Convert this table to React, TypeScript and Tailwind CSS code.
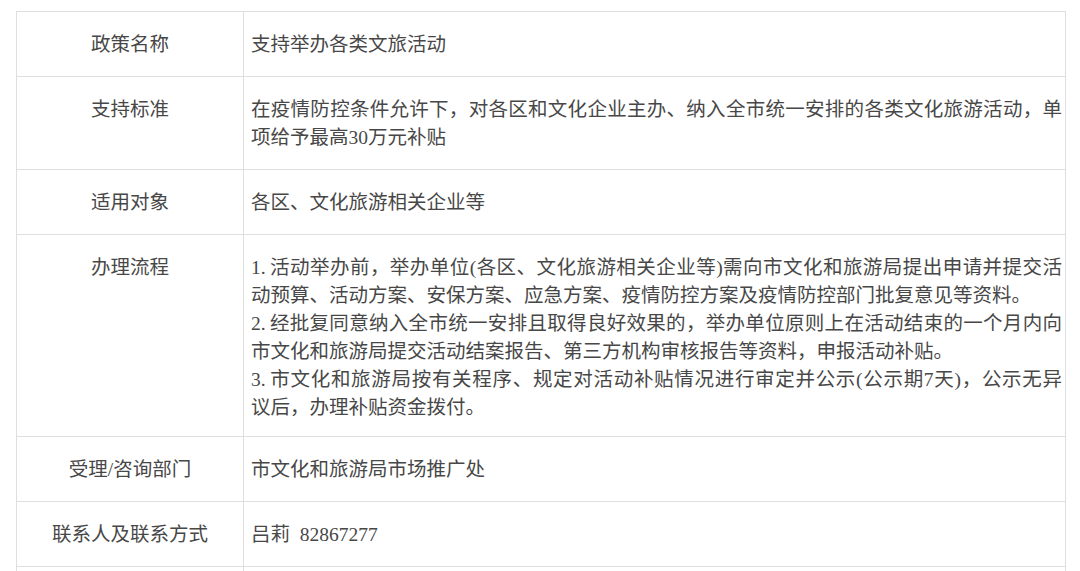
const font = {
  fontFamily: '"Liberation Serif", "Noto Sans CJK SC", serif',
};

type Line = { text: string; num?: string; full?: boolean };

type Row = {
  label: string;
  lines: Line[];
  pb?: string;
};

const rows: Row[] = [
  { label: "政策名称", lines: [{ text: "支持举办各类文旅活动" }] },
  {
    label: "支持标准",
    lines: [
      {
        text: "在疫情防控条件允许下，对各区和文化企业主办、纳入全市统一安排的各类文化旅游活动，单",
        full: true,
      },
      { text: "项给予最高30万元补贴" },
    ],
  },
  { label: "适用对象", lines: [{ text: "各区、文化旅游相关企业等" }] },
  {
    label: "办理流程",
    pb: "pb-[14px]",
    lines: [
      {
        num: "1.",
        text: "活动举办前，举办单位(各区、文化旅游相关企业等)需向市文化和旅游局提出申请并提交活",
        full: true,
      },
      { text: "动预算、活动方案、安保方案、应急方案、疫情防控方案及疫情防控部门批复意见等资料。" },
      {
        num: "2.",
        text: "经批复同意纳入全市统一安排且取得良好效果的，举办单位原则上在活动结束的一个月内向",
        full: true,
      },
      { text: "市文化和旅游局提交活动结案报告、第三方机构审核报告等资料，申报活动补贴。" },
      {
        num: "3.",
        text: "市文化和旅游局按有关程序、规定对活动补贴情况进行审定并公示(公示期7天)，公示无异",
        full: true,
      },
      { text: "议后，办理补贴资金拨付。" },
    ],
  },
  { label: "受理/咨询部门", lines: [{ text: "市文化和旅游局市场推广处" }] },
  { label: "联系人及联系方式", lines: [{ text: "吕莉  82867277" }] },
];

function PolicyRow({ row }: { row: Row }) {
  const pb = row.pb ?? "pb-[17px]";
  return (
    <div className="flex">
      <div
        className={`w-[227px] shrink-0 border-r border-b border-[#dfdfdf] pt-[19px] ${pb} text-center`}
      >
        {row.label}
      </div>
      <div
        className={`w-[822px] shrink-0 border-r border-b border-[#dfdfdf] pl-[7px] pr-[3px] pt-[19px] ${pb}`}
      >
        {row.lines.map((line, i) => (
          <div
            key={i}
            className={
              line.full
                ? "text-justify [text-align-last:justify] whitespace-nowrap"
                : "whitespace-pre"
            }
          >
            {line.num && <span className="mr-[4px]">{line.num}</span>}
            {line.text}
          </div>
        ))}
      </div>
    </div>
  );
}

export default function App() {
  return (
    <div
      className="h-[571px] w-[1080px] overflow-hidden bg-white text-[19.5px] leading-[28px] text-[#474747]"
      style={font}
    >
      <div className="ml-[16px] mt-[11px] w-[1050px] border-l border-t border-[#dfdfdf]">
        {rows.map((row) => (
          <PolicyRow key={row.label} row={row} />
        ))}
        <div className="flex">
          <div className="h-[64px] w-[227px] shrink-0 border-r border-[#dfdfdf]" />
          <div className="h-[64px] w-[822px] shrink-0 border-r border-[#dfdfdf]" />
        </div>
      </div>
    </div>
  );
}
